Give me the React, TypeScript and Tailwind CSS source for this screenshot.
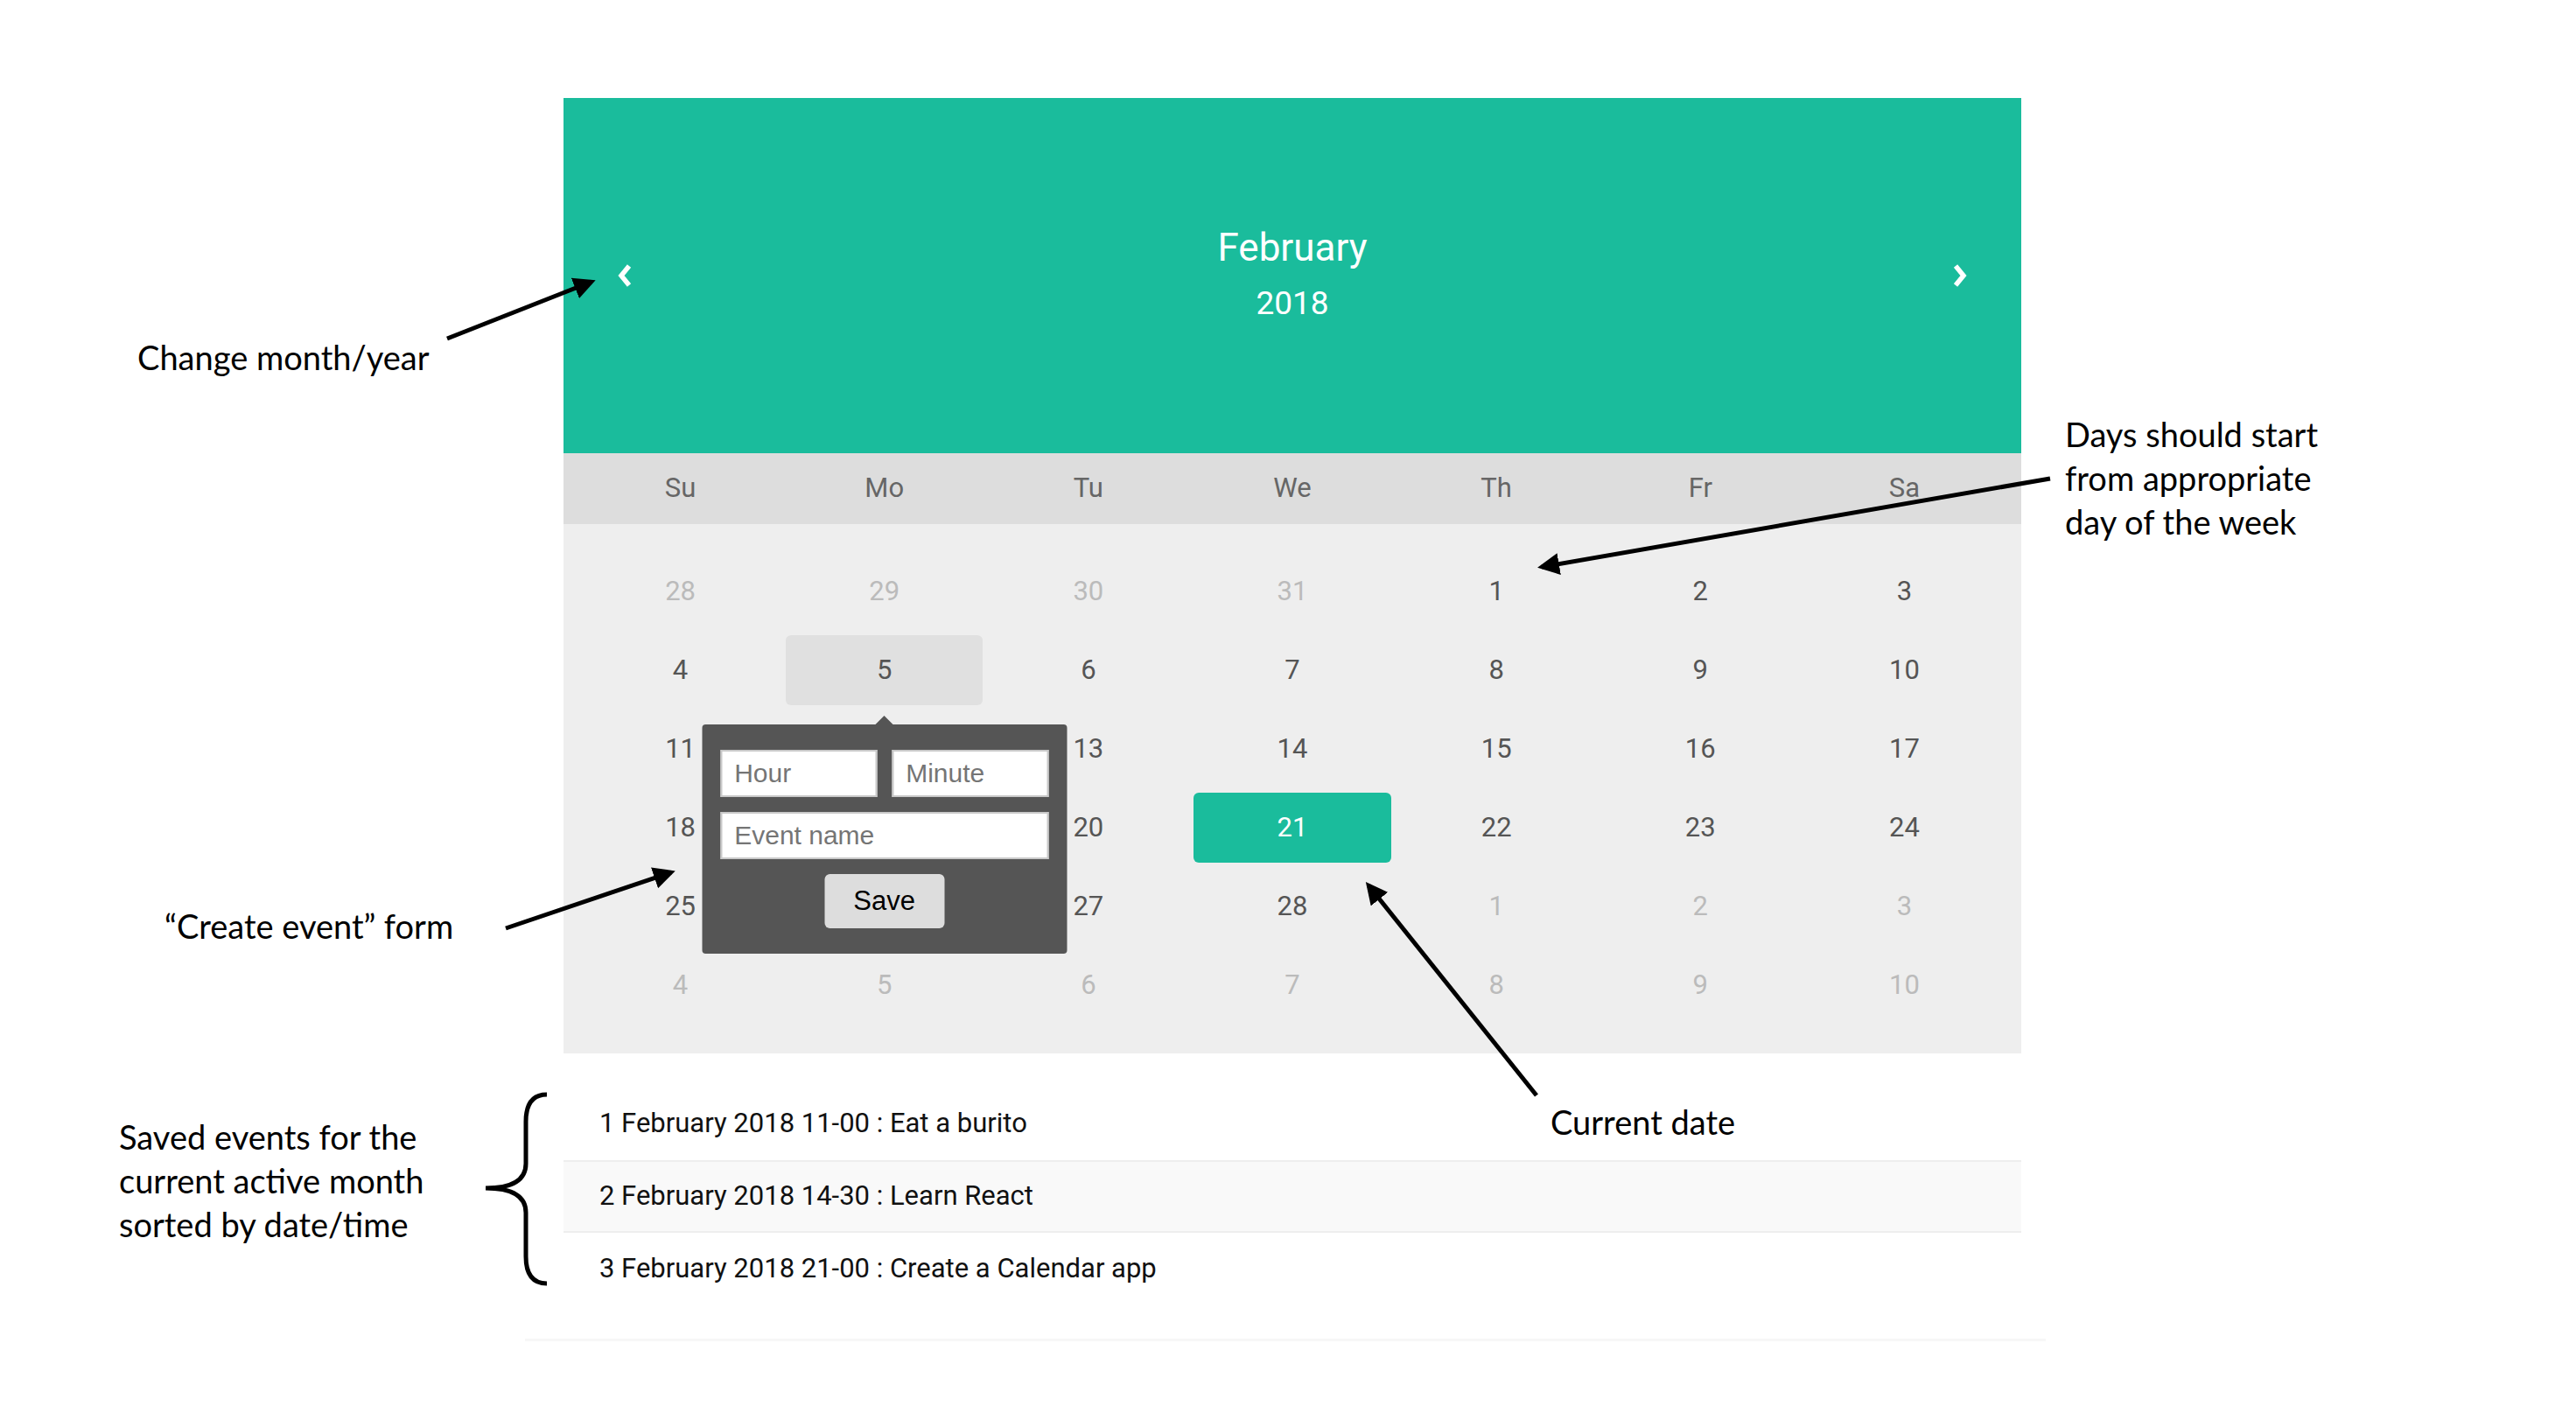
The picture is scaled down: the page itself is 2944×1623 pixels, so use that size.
import React from "react";

type Day = { n: number; muted?: boolean };

const weekdays = ["Su", "Mo", "Tu", "We", "Th", "Fr", "Sa"];

const rows: Day[][] = [
  [{ n: 28, muted: true }, { n: 29, muted: true }, { n: 30, muted: true }, { n: 31, muted: true }, { n: 1 }, { n: 2 }, { n: 3 }],
  [4, 5, 6, 7, 8, 9, 10].map((n) => ({ n })),
  [11, 12, 13, 14, 15, 16, 17].map((n) => ({ n })),
  [18, 19, 20, 21, 22, 23, 24].map((n) => ({ n })),
  [{ n: 25 }, { n: 26 }, { n: 27 }, { n: 28 }, { n: 1, muted: true }, { n: 2, muted: true }, { n: 3, muted: true }],
  [4, 5, 6, 7, 8, 9, 10].map((n) => ({ n, muted: true })),
];

const events = [
  "1 February 2018 11-00 : Eat a burito",
  "2 February 2018 14-30 : Learn React",
  "3 February 2018 21-00 : Create a Calendar app",
];

function Chevron({ dir }: { dir: "left" | "right" }) {
  return (
    <svg width="20" height="26" viewBox="0 0 20 26" className="text-white">
      {dir === "left" ? (
        <polyline points="15,2 6,13 15,24" fill="none" stroke="currentColor" strokeWidth="5.5" />
      ) : (
        <polyline points="5,2 14,13 5,24" fill="none" stroke="currentColor" strokeWidth="5.5" />
      )}
    </svg>
  );
}

function EventForm() {
  return (
    <div className="absolute left-1/2 top-[calc(100%+22px)] z-10 w-[417px] -translate-x-1/2 rounded-[4px] bg-[#555] px-[21px] pb-[29px] pt-[29px]">
      <div className="absolute -top-[10px] left-1/2 h-0 w-0 -translate-x-1/2 border-x-[10px] border-b-[10px] border-x-transparent border-b-[#555]" />
      <div className="flex gap-[17px]">
        <input
          placeholder="Hour"
          className="h-[54px] w-[179px] border-2 border-[#c9c9c9] bg-white pl-[14px] font-['Liberation_Sans',Arial,sans-serif] text-[30px] text-[#333] outline-none placeholder:text-[#757575]"
        />
        <input
          placeholder="Minute"
          className="h-[54px] w-[179px] border-2 border-[#c9c9c9] bg-white pl-[14px] font-['Liberation_Sans',Arial,sans-serif] text-[30px] text-[#333] outline-none placeholder:text-[#757575]"
        />
      </div>
      <input
        placeholder="Event name"
        className="mt-[17px] h-[54px] w-full border-2 border-[#c9c9c9] bg-white pl-[14px] font-['Liberation_Sans',Arial,sans-serif] text-[30px] text-[#333] outline-none placeholder:text-[#757575]"
      />
      <div className="mt-[17px] flex justify-center">
        <button className="h-[62px] w-[137px] rounded-[6px] bg-[#ddd] font-['Liberation_Sans',Arial,sans-serif] text-[31px] text-black">
          Save
        </button>
      </div>
    </div>
  );
}

function Calendar() {
  return (
    <div className="w-[1666px] font-['Roboto',sans-serif]">
      <div className="flex h-[406px] items-center justify-between bg-[#1abc9c] px-[60px]">
        <Chevron dir="left" />
        <div className="flex flex-col items-center text-white">
          <div className="text-[44px] leading-[63px]">February</div>
          <div className="text-[37px] leading-[63px]">2018</div>
        </div>
        <Chevron dir="right" />
      </div>
      <div className="grid h-[81px] grid-cols-7 items-center gap-x-[8px] bg-[#ddd] px-[21px] text-[31px] text-[#666]">
        {weekdays.map((w) => (
          <div key={w} className="text-center">
            {w}
          </div>
        ))}
      </div>
      <div className="grid grid-cols-7 gap-x-[8px] gap-y-[10px] bg-[#eee] px-[21px] pb-[38px] pt-[37px] text-[31px]">
        {rows.flat().map((d, i) => {
          const isToday = i === 24;
          const isHover = i === 8;
          return (
            <div
              key={i}
              className={
                "relative flex h-[80px] items-center justify-center rounded-[6px] " +
                (isToday
                  ? "bg-[#1abc9c] text-white"
                  : isHover
                  ? "bg-[#e0e0e0] text-[#555]"
                  : d.muted
                  ? "text-[#bbb]"
                  : "text-[#555]")
              }
            >
              {d.n}
              {isHover && <EventForm />}
            </div>
          );
        })}
      </div>
      <div className="pb-[38px] pt-[39px]">
        {events.map((e, i) => (
          <div
            key={e}
            className={
              "flex h-[83px] items-center pl-[41px] text-[31px] text-[#111] " +
              (i === 1 ? "border-y-2 border-[#eee] bg-[#f9f9f9]" : "")
            }
          >
            {e}
          </div>
        ))}
      </div>
      <div className="-ml-[44px] h-[3px] w-[1738px] bg-[#f7f7f7]" />
    </div>
  );
}

function Arrows() {
  return (
    <svg className="pointer-events-none absolute left-0 top-0" width="2944" height="1623">
      <defs>
        <marker id="head" viewBox="0 0 10 10" refX="8" refY="5" markerWidth="5" markerHeight="5" orient="auto-start-reverse">
          <path d="M0,0 L10,5 L0,10 z" fill="#000" />
        </marker>
      </defs>
      <g stroke="#000" strokeWidth="5" fill="none">
        <line x1="511" y1="387" x2="676" y2="322" markerEnd="url(#head)" />
        <line x1="2343" y1="547" x2="1762" y2="648" markerEnd="url(#head)" />
        <line x1="578" y1="1061" x2="767" y2="997" markerEnd="url(#head)" />
        <line x1="1756" y1="1252" x2="1564" y2="1012" markerEnd="url(#head)" />
        <path d="M625,1251 Q601,1251 601,1282 L601,1330 Q601,1358 555,1358 Q601,1358 601,1386 L601,1436 Q601,1467 625,1467" />
      </g>
    </svg>
  );
}

export default function App() {
  return (
    <div className="relative h-[1623px] w-[2944px] overflow-hidden bg-white">
      <div className="pl-[644px] pt-[112px]">
        <Calendar />
      </div>
      <Arrows />
      <div className="absolute inset-0 font-['Lato','Open_Sans',sans-serif] text-[38px] leading-[50px] text-black">
        <div className="absolute left-[157px] top-[383px]">Change month/year</div>
        <div className="absolute left-[2360px] top-[471px]">
          Days should start
          <br />
          from appropriate
          <br />
          day of the week
        </div>
        <div className="absolute left-[188px] top-[1033px]">“Create event” form</div>
        <div className="absolute left-[1772px] top-[1257px]">Current date</div>
        <div className="absolute left-[136px] top-[1274px]">
          Saved events for the
          <br />
          current active month
          <br />
          sorted by date/time
        </div>
      </div>
    </div>
  );
}
